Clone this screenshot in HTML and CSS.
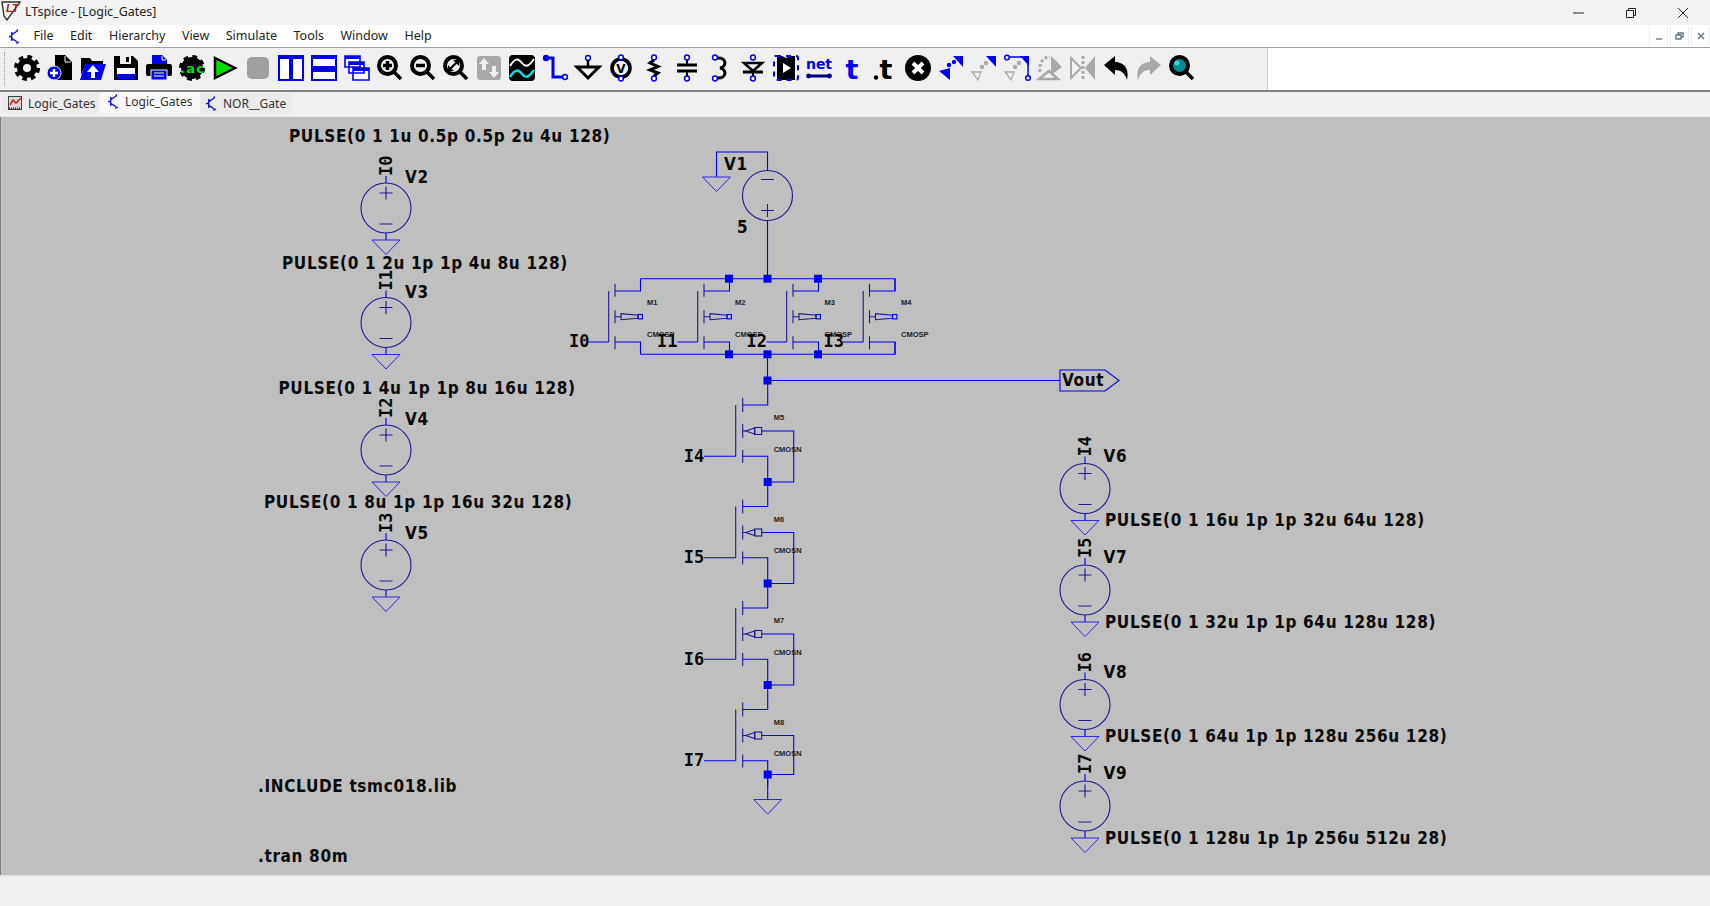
FILE: index.html
```html
<!DOCTYPE html>
<html>
<head>
    <meta http-equiv="Content-Type" content="text/html;charset=UTF-8"/>
    <title>LTspice - [Logic_Gates]</title>
    <link rel="stylesheet" href="styles.css">
</head>
<body>
<div class="titlebar">
    <svg class="app-logo" viewBox="0 0 20 20">
        <path class="logo-frame" d="M1 1H19L6 19L3 15Z"/>
        <text class="logo-text" x="5" y="11">LT</text>
    </svg>
    <span class="title-text">LTspice - [Logic_Gates]</span>
    <div class="win-buttons">
        <svg class="win-btn" viewBox="0 0 12 12"><path d="M0 6H11"/></svg>
        <svg class="win-btn" viewBox="0 0 12 12"><path d="M1.5 3.5H8.5V10.5H1.5Z M3.5 3.5V1.5H10.5V8.5H8.5"/></svg>
        <svg class="win-btn" viewBox="0 0 12 12"><path d="M1 1L11 11M11 1L1 11"/></svg>
    </div>
</div>

<div class="menubar">
    <svg class="sch-icon menu-icon" viewBox="0 0 12 16"><path d="M0 8H3M3 3V13M3 6L9 2V0M3 10L9 14M8 15.5L11 14"/></svg>
    <span class="menu-item">File</span>
    <span class="menu-item">Edit</span>
    <span class="menu-item">Hierarchy</span>
    <span class="menu-item">View</span>
    <span class="menu-item">Simulate</span>
    <span class="menu-item">Tools</span>
    <span class="menu-item">Window</span>
    <span class="menu-item">Help</span>
    <div class="mdi-buttons">
        <span class="mdi-btn"><svg viewBox="0 0 10 10"><path d="M2 8H8"/></svg></span>
        <span class="mdi-btn"><svg viewBox="0 0 10 10"><path d="M1 4H6V8H1Z M3 4V2H8V6H6"/></svg></span>
        <span class="mdi-btn"><svg viewBox="0 0 10 10"><path d="M2 2L8 8M8 2L2 8"/></svg></span>
    </div>
</div>

<div class="toolbar">
    <div class="tools">
        <div class="gripper"></div>
        <!-- settings -->
        <svg class="tool" viewBox="0 0 26 26"><circle cx="13" cy="13" r="11" fill="none" stroke="#000" stroke-width="4" stroke-dasharray="4.6 4.04"/><circle cx="13" cy="13" r="7" fill="none" stroke="#000" stroke-width="6"/></svg>
        <!-- new -->
        <svg class="tool" viewBox="0 0 26 26"><path d="M8 0H18L25 7V25H8Z"/><path d="M18 1V7H24" fill="none" stroke="#f0f0f0"/><circle cx="7" cy="18" r="7" fill="#0000e0" stroke="#f0f0f0"/><path d="M7 14V22M3 18H11" stroke="#fff" stroke-width="2.4"/></svg>
        <!-- open -->
        <svg class="tool" viewBox="0 0 26 26"><path d="M1 3H10L12 6H23V10H5L1 20Z"/><path d="M5 9H26L21 25H0Z" fill="#0000f0"/><path d="M13 10L7 17H11V23H15V17H19Z" fill="#fff"/></svg>
        <!-- save -->
        <svg class="tool" viewBox="0 0 26 26"><path d="M1 1H20L25 6V25H1Z"/><rect x="7" y="1" width="11" height="8" fill="#f0f0f0"/><rect x="13" y="2" width="3" height="5"/><rect x="4" y="13" width="18" height="9" fill="#fff"/><rect x="4" y="19" width="18" height="5" fill="#0000f0"/></svg>
        <!-- print -->
        <svg class="tool" viewBox="0 0 26 26"><path d="M6 0H16L21 5V10H6Z" fill="#0000f0"/><path d="M16 1V5H20" fill="none" stroke="#fff"/><rect x="0" y="9" width="26" height="12" rx="2"/><rect x="5" y="15" width="16" height="10" fill="#0000f0" stroke="#f0f0f0"/><path d="M8 18H18M8 21H18" stroke="#fff"/></svg>
        <!-- ac analysis -->
        <svg class="tool" viewBox="0 0 26 26"><circle cx="13" cy="13" r="11" fill="none" stroke="#000" stroke-width="4" stroke-dasharray="4.6 4.04"/><circle cx="13" cy="13" r="11"/><text class="ac-text" x="1" y="18" textLength="24">.ac</text></svg>
        <!-- run -->
        <svg class="tool" viewBox="0 0 26 26"><path d="M3 3L23 13L3 23Z" fill="#00e000" stroke="#000" stroke-width="2.5"/></svg>
        <!-- halt -->
        <svg class="tool" viewBox="0 0 26 26"><rect x="2" y="2" width="22" height="22" rx="5" fill="#a0a0a0"/></svg>
        <!-- tile vertically -->
        <svg class="tool" viewBox="0 0 26 26"><path class="tb-win" d="M1 1H12V25H1Z M14 1H25V25H14Z"/><path class="tb-head" d="M1 1H12V4H1Z M14 1H25V4H14Z"/></svg>
        <!-- tile horizontally -->
        <svg class="tool" viewBox="0 0 26 26"><path class="tb-win" d="M1 1H25V12H1Z M1 14H25V25H1Z"/><path class="tb-head" d="M1 1H25V4H1Z M1 14H25V17H1Z"/></svg>
        <!-- cascade -->
        <svg class="tool" viewBox="0 0 26 26"><path class="tb-win thin" d="M1 1H16V12H1Z M5 7H20V18H5Z M9 13H25V25H9Z"/><path class="tb-head" d="M1 1H16V4H1Z M5 7H20V10H5Z M9 13H25V16H9Z"/></svg>
        <!-- zoom in -->
        <svg class="tool" viewBox="0 0 26 26"><circle cx="10.5" cy="10.5" r="8.5" fill="#f0f0f0" stroke="#000" stroke-width="4"/><path d="M6 10.5H15M10.5 6V15M17 17L24 24" stroke="#000" stroke-width="3.5" fill="none"/></svg>
        <!-- zoom out -->
        <svg class="tool" viewBox="0 0 26 26"><circle cx="10.5" cy="10.5" r="8.5" fill="#f0f0f0" stroke="#000" stroke-width="4"/><path d="M6 10.5H15M17 17L24 24" stroke="#000" stroke-width="3.5" fill="none"/></svg>
        <!-- zoom fit -->
        <svg class="tool" viewBox="0 0 26 26"><circle cx="10.5" cy="10.5" r="8.5" fill="#f0f0f0" stroke="#000" stroke-width="4"/><path d="M17 17L24 24" stroke="#000" stroke-width="3.5"/><path d="M7 14L14 7" stroke="#000" stroke-width="2"/><path d="M5 10V16H11Z M16 11V5H10Z"/></svg>
        <!-- pan -->
        <svg class="tool" viewBox="0 0 26 26"><rect x="1" y="1" width="24" height="24" rx="3" fill="#a8a8a8"/><path d="M8 3L13 9H10V15H6V9H3Z M18 23L13 17H16V11H20V17H23Z" fill="#f0f0f0"/></svg>
        <!-- waveform -->
        <svg class="tool" viewBox="0 0 26 26"><rect x="0" y="0" width="26" height="26" rx="4"/><path d="M1 11C6 3 9 3 13 8S20 11 25 4" fill="none" stroke="#fff" stroke-width="2"/><path d="M1 22C6 14 9 14 13 19S20 22 25 15" fill="none" stroke="#00e0e0" stroke-width="2.5"/></svg>
        <!-- wire -->
        <svg class="tool" viewBox="0 0 26 26"><path d="M4 3H11V22H21" fill="none" stroke="#0000f0" stroke-width="3"/><circle cx="4" cy="3" r="3.2" fill="#0000f0"/><circle cx="23" cy="22" r="2.4" fill="#fff" stroke="#0000f0" stroke-width="1.5"/></svg>
        <!-- ground -->
        <svg class="tool" viewBox="0 0 26 26"><circle class="pin" cx="13" cy="3" r="2.4"/><path d="M13 5V11" stroke="#000" stroke-width="2.5"/><path d="M2 12H24L13 23Z" fill="none" stroke="#000" stroke-width="3"/></svg>
        <!-- label net -->
        <svg class="tool" viewBox="0 0 26 26"><circle cx="13" cy="13" r="9" fill="none" stroke="#000" stroke-width="3.6"/><text class="v-text" x="13" y="18" text-anchor="middle">V</text><circle class="pin" cx="13" cy="2.5" r="2.4"/><circle class="pin" cx="13" cy="23.5" r="2.4"/></svg>
        <!-- resistor -->
        <svg class="tool" viewBox="0 0 26 26"><path d="M13 5L9 8L17 11.5L9 15L17 18L13 21" fill="none" stroke="#000" stroke-width="3"/><circle class="pin" cx="13" cy="2.5" r="2.4"/><circle class="pin" cx="13" cy="23.5" r="2.4"/></svg>
        <!-- capacitor -->
        <svg class="tool" viewBox="0 0 26 26"><path d="M3 10H23M3 16H23" stroke="#000" stroke-width="3"/><path d="M13 5V10M13 16V21" stroke="#000" stroke-width="2"/><circle class="pin" cx="13" cy="2.5" r="2.4"/><circle class="pin" cx="13" cy="23.5" r="2.4"/></svg>
        <!-- inductor -->
        <svg class="tool" viewBox="0 0 26 26"><path d="M10 3C20 2 20 12 13 13C20 14 20 24 10 23" fill="none" stroke="#000" stroke-width="3"/><circle class="pin" cx="8" cy="2.5" r="2.4"/><circle class="pin" cx="8" cy="23.5" r="2.4"/></svg>
        <!-- diode -->
        <svg class="tool" viewBox="0 0 26 26"><path d="M4 8H22L13 16Z" fill="none" stroke="#000" stroke-width="2.5"/><path d="M3 17H23" stroke="#000" stroke-width="3"/><path d="M13 17V21" stroke="#000" stroke-width="2"/><circle class="pin" cx="13" cy="2.5" r="2.4"/><circle class="pin" cx="13" cy="23.5" r="2.4"/></svg>
        <!-- component -->
        <svg class="tool" viewBox="0 0 26 26"><path d="M4 1H9L13 3L17 1H22V25H4Z"/><rect x="1" y="1" width="24" height="24" rx="2" fill="none" stroke="#0000f0" stroke-width="2" stroke-dasharray="5 5"/><path d="M10 8L18 13L10 18Z" fill="#fff"/></svg>
        <!-- net name -->
        <svg class="tool" viewBox="0 0 26 26"><text class="net-text" x="0" y="14" textLength="26">net</text><path d="M2 21H24" stroke="#000080" stroke-width="3"/><circle cx="2.5" cy="21" r="2.4" fill="#000080"/><circle cx="23.5" cy="21" r="2.4" fill="#000080"/></svg>
        <!-- text -->
        <svg class="tool" viewBox="0 0 26 26"><text class="t-text blue" x="13" y="24" text-anchor="middle">t</text></svg>
        <!-- spice directive -->
        <svg class="tool" viewBox="0 0 26 26"><text class="t-text" x="14" y="24" text-anchor="middle">t</text><circle cx="4" cy="22.5" r="2.2"/></svg>
        <!-- cut -->
        <svg class="tool" viewBox="0 0 26 26"><circle cx="13" cy="13" r="13"/><path d="M8 8L18 18M18 8L8 18" stroke="#fff" stroke-width="4"/></svg>
        <!-- move -->
        <svg class="tool" viewBox="0 0 26 26"><path d="M15 1H25V12Z" fill="#0000f0"/><path d="M1 16L12 13V25Z" fill="#0000f0"/><circle cx="11" cy="10" r="2.2" fill="#0000f0"/><circle cx="16" cy="7" r="2.2" fill="#0000f0"/></svg>
        <!-- drag -->
        <svg class="tool" viewBox="0 0 26 26"><path d="M15 1H25V12Z" fill="#0000f0"/><path d="M1 17L10 17L7 25Z" fill="none" stroke="#a8a8a8" stroke-width="1.3"/><circle cx="11" cy="12" r="2.2" fill="#a8a8a8"/><circle cx="15" cy="8" r="2.2" fill="#a8a8a8"/></svg>
        <!-- drag wire -->
        <svg class="tool" viewBox="0 0 26 26"><path d="M4 2H24V21" fill="none" stroke="#0000f0" stroke-width="1.5"/><path d="M16 1H25V11Z" fill="#0000f0"/><circle cx="3" cy="2.5" r="2.3" fill="#fff" stroke="#0000f0" stroke-width="1.5"/><circle cx="24" cy="23" r="2.3" fill="#fff" stroke="#0000f0" stroke-width="1.5"/><path d="M1 17L10 17L7 25Z" fill="none" stroke="#a8a8a8" stroke-width="1.3"/><circle cx="11" cy="12" r="2.2" fill="#a8a8a8"/><circle cx="15" cy="8" r="2.2" fill="#a8a8a8"/></svg>
        <!-- rotate -->
        <svg class="tool" viewBox="0 0 26 26"><path d="M14 1L25 12L14 20Z" fill="#a8a8a8"/><path d="M3 17C2 8 6 2 13 2" fill="none" stroke="#a8a8a8" stroke-width="3" stroke-dasharray="3 2"/><path d="M2 24L12 16L21 24Z" fill="none" stroke="#a8a8a8" stroke-width="2.5"/></svg>
        <!-- mirror -->
        <svg class="tool" viewBox="0 0 26 26"><path d="M1 3L11 13L1 23Z" fill="none" stroke="#a8a8a8" stroke-width="2"/><path d="M25 1L15 13L25 25Z" fill="#a8a8a8"/><path d="M13 1V25" stroke="#a8a8a8" stroke-width="3" stroke-dasharray="3 2"/></svg>
        <!-- undo -->
        <svg class="tool" viewBox="0 0 26 26"><path d="M1 10L12 1V7C20 7 27 13 24 25C22 18 18 15 12 15V20Z"/></svg>
        <!-- redo -->
        <svg class="tool" viewBox="0 0 26 26"><path d="M25 10L14 1V7C6 7 -1 13 2 25C4 18 8 15 14 15V20Z" fill="#a8a8a8"/></svg>
        <!-- find -->
        <svg class="tool" viewBox="0 0 26 26"><circle cx="10.5" cy="10.5" r="8.5" fill="#008c96" stroke="#000" stroke-width="4"/><circle cx="8" cy="8" r="2.5" fill="#40d8d8"/><path d="M17 17L24 24" stroke="#000" stroke-width="3.5"/></svg>
    </div>
    <div class="toolbar-blank"></div>
</div>

<div class="tabbar">
    <div class="tab tab-plot">
        <svg class="plot-icon" viewBox="0 0 14 14"><rect x="0.5" y="0.5" width="13" height="13" fill="#d8d8d8" stroke="#404040"/><path d="M1 12.5H13" stroke="#202020" stroke-width="2" stroke-dasharray="1 1"/><path d="M2 9L5 4L8 7L13 2" fill="none" stroke="#d02020" stroke-width="1.6"/></svg>
        <span>Logic_Gates</span>
    </div>
    <div class="tab tab-active">
        <svg class="sch-icon" viewBox="0 0 12 16"><path d="M0 8H3M3 3V13M3 6L9 2V0M3 10L9 14M8 15.5L11 14"/></svg>
        <span>Logic_Gates</span>
    </div>
    <div class="tab tab-last">
        <svg class="sch-icon" viewBox="0 0 12 16"><path d="M0 8H3M3 3V13M3 6L9 2V0M3 10L9 14M8 15.5L11 14"/></svg>
        <span>NOR__Gate</span>
    </div>
</div>

<div class="canvas">
    <svg class="schematic" viewBox="0 116 1710 758" width="1710" height="758">
        <defs>
            <g id="vcell">
                <circle class="sym" r="25"/>
                <path class="sym" d="M-6.5 -15H6.5M0 -21.5V-8.5M-6.5 16H6.5"/>
            </g>
            <g id="gnd">
                <path class="gnd" d="M-14 0H14L0 14.5Z"/>
            </g>
            <g id="vsrc">
                <use href="#vcell"/>
                <path class="wire" d="M0 -25V-32M0 25V32"/>
                <use href="#gnd" y="32"/>
            </g>
            <g id="pmos">
                <path class="sym" d="M0 -33V-20M0 -6.5V6.5M0 19.5V32.5M-6.3 -25.7V25.3M0 0H6"/>
                <path class="wire" d="M-26.5 25.3H-6.3M0 -25.7H25.5V-38M0 25.3H25.5V37.6"/>
                <path class="sym" d="M6 -3V3L23 1.5V-1.5Z"/>
                <rect class="bulk" x="23" y="-2.2" width="4.4" height="4.4"/>
            </g>
            <g id="nmos">
                <path class="sym" d="M0 -33V-19M0 -7V7M0 19V32M-7 -26V25.3M0 0H3"/>
                <path class="wire" d="M-38.7 25.3H-7M0 -26H25V-51M0 25.3H25V51"/>
                <path class="sym" d="M3 0L12 -3V3Z"/>
                <rect class="sym" x="12" y="-3.5" width="7" height="7"/>
            </g>
            <path id="body-long" class="wire" d="M19 0H51V51H25"/>
            <rect id="node" class="node" x="-4" y="-4" width="8" height="8"/>
        </defs>

        <!-- left sources -->
        <g transform="translate(386 207)">
            <use href="#vsrc"/>
            <text class="sch mono" transform="translate(6 -32) rotate(-90)">I0</text>
            <text class="sch" x="19" y="-25">V2</text>
        </g>
        <g transform="translate(386 321.5)">
            <use href="#vsrc"/>
            <text class="sch mono" transform="translate(6 -32) rotate(-90)">I1</text>
            <text class="sch" x="19" y="-25">V3</text>
        </g>
        <g transform="translate(386 449)">
            <use href="#vsrc"/>
            <text class="sch mono" transform="translate(6 -32) rotate(-90)">I2</text>
            <text class="sch" x="19" y="-25">V4</text>
        </g>
        <g transform="translate(386 564)">
            <use href="#vsrc"/>
            <text class="sch mono" transform="translate(6 -32) rotate(-90)">I3</text>
            <text class="sch" x="19" y="-26">V5</text>
        </g>
        <text class="sch" x="289" y="140.5">PULSE(0 1 1u 0.5p 0.5p 2u 4u 128)</text>
        <text class="sch" x="282" y="268">PULSE(0 1 2u 1p 1p 4u 8u 128)</text>
        <text class="sch" x="278.5" y="392.5">PULSE(0 1 4u 1p 1p 8u 16u 128)</text>
        <text class="sch" x="264" y="507">PULSE(0 1 8u 1p 1p 16u 32u 128)</text>

        <!-- right sources -->
        <g transform="translate(1085 487.5)">
            <use href="#vsrc"/>
            <text class="sch mono" transform="translate(6 -32) rotate(-90)">I4</text>
            <text class="sch" x="18.5" y="-27">V6</text>
        </g>
        <g transform="translate(1085 589)">
            <use href="#vsrc"/>
            <text class="sch mono" transform="translate(6 -32) rotate(-90)">I5</text>
            <text class="sch" x="18.5" y="-27">V7</text>
        </g>
        <g transform="translate(1085 703.5)">
            <use href="#vsrc"/>
            <text class="sch mono" transform="translate(6 -32) rotate(-90)">I6</text>
            <text class="sch" x="18.5" y="-27">V8</text>
        </g>
        <g transform="translate(1085 805)">
            <use href="#vsrc"/>
            <text class="sch mono" transform="translate(6 -32) rotate(-90)">I7</text>
            <text class="sch" x="18.5" y="-27">V9</text>
        </g>
        <text class="sch" x="1105" y="525">PULSE(0 1 16u 1p 1p 32u 64u 128)</text>
        <text class="sch" x="1105" y="626.5">PULSE(0 1 32u 1p 1p 64u 128u 128)</text>
        <text class="sch" x="1105" y="741">PULSE(0 1 64u 1p 1p 128u 256u 128)</text>
        <text class="sch" x="1105" y="843">PULSE(0 1 128u 1p 1p 256u 512u 28)</text>

        <!-- supply -->
        <use href="#vcell" transform="translate(767.5 194.5) rotate(180)"/>
        <path class="wire" d="M767.5 169.5V151H716.5V176M767.5 219.5V277.7M767.5 353.3V379.5"/>
        <use href="#gnd" x="716.5" y="176"/>
        <text class="sch" x="724" y="169">V1</text>
        <text class="sch" x="737" y="232">5</text>

        <!-- pull up -->
        <path class="wire" d="M640.5 277.7H895V290M640.5 353.3H895V341"/>
        <use href="#pmos" x="615" y="315.7"/>
        <use href="#pmos" x="704" y="315.7"/>
        <use href="#pmos" x="793" y="315.7"/>
        <use href="#pmos" x="869.5" y="315.7"/>
        <text class="tiny" x="647" y="303.5">M1</text>
        <text class="tiny" x="647" y="335.5">CMOSP</text>
        <text class="tiny" x="735" y="303.5">M2</text>
        <text class="tiny" x="735" y="335.5">CMOSP</text>
        <text class="tiny" x="824.5" y="303.5">M3</text>
        <text class="tiny" x="824.5" y="335.5">CMOSP</text>
        <text class="tiny" x="901" y="303.5">M4</text>
        <text class="tiny" x="901" y="335.5">CMOSP</text>
        <text class="sch mono" x="569" y="346">I0</text>
        <text class="sch mono" x="657" y="346">I1</text>
        <text class="sch mono" x="746.5" y="346">I2</text>
        <text class="sch mono" x="823.5" y="346">I3</text>
        <use href="#node" x="729" y="277.7"/>
        <use href="#node" x="767.5" y="277.7"/>
        <use href="#node" x="818" y="277.7"/>
        <use href="#node" x="729" y="353.3"/>
        <use href="#node" x="767.5" y="353.3"/>
        <use href="#node" x="818" y="353.3"/>
        <use href="#node" x="767.5" y="379.5"/>

        <!-- output -->
        <path class="wire" d="M767.5 379.5H1060"/>
        <path class="flag" d="M1060 369H1105L1119 379.5L1105 390H1060Z"/>
        <text class="sch" x="1062" y="385">Vout</text>

        <!-- pull down -->
        <g transform="translate(742.7 430)">
            <use href="#nmos"/><use href="#body-long"/>
            <text class="tiny" x="31" y="-11">M5</text>
            <text class="tiny" x="31" y="20.5">CMOSN</text>
            <text class="sch mono" x="-59" y="30.7">I4</text>
            <use href="#node" x="25" y="51"/>
        </g>
        <g transform="translate(742.7 531.5)">
            <use href="#nmos"/><use href="#body-long"/>
            <text class="tiny" x="31" y="-11">M6</text>
            <text class="tiny" x="31" y="20.5">CMOSN</text>
            <text class="sch mono" x="-59" y="30.7">I5</text>
            <use href="#node" x="25" y="51"/>
        </g>
        <g transform="translate(742.7 633)">
            <use href="#nmos"/><use href="#body-long"/>
            <text class="tiny" x="31" y="-11">M7</text>
            <text class="tiny" x="31" y="20.5">CMOSN</text>
            <text class="sch mono" x="-59" y="30.7">I6</text>
            <use href="#node" x="25" y="51"/>
        </g>
        <g transform="translate(742.7 734.5)">
            <use href="#nmos"/>
            <path class="wire" d="M19 0H51V39H25"/>
            <text class="tiny" x="31" y="-11">M8</text>
            <text class="tiny" x="31" y="20.5">CMOSN</text>
            <text class="sch mono" x="-59" y="30.7">I7</text>
            <use href="#node" x="25" y="39"/>
        </g>
        <path class="wire" d="M767.7 774V798.5"/>
        <use href="#gnd" x="767.7" y="798.5"/>

        <!-- directives -->
        <text class="sch" x="258" y="791">.INCLUDE tsmc018.lib</text>
        <text class="sch" x="258" y="861">.tran 80m</text>
    </svg>
</div>

<div class="statusbar"></div>
</body>
</html>
```

FILE: styles.css
```css
html, body {
    margin: 0;
    padding: 0;
    height: 100%;
}

body {
    display: flex;
    flex-direction: column;
    height: 100vh;
    overflow: hidden;
    background-color: #f0f0f0;
    font-family: "Noto Sans", "Open Sans", sans-serif;
    font-size: 12.5px;
    color: #222;
}

/* title bar */
.titlebar {
    flex: 0 0 25px;
    display: flex;
    align-items: center;
    background-color: #f3f3f3;
}

.app-logo {
    width: 20px;
    height: 20px;
    margin: 0 4px 3px 1px;
}

.logo-frame {
    fill: #f3f3f3;
    stroke: #333;
    stroke-width: 1.4;
}

.logo-text {
    font: italic bold 11px "Liberation Sans", sans-serif;
    fill: #b02020;
}

.title-text {
    margin-bottom: 2px;
}

.win-buttons {
    margin-left: auto;
    display: flex;
    gap: 40px;
    margin-right: 21px;
}

.win-btn {
    width: 12px;
    height: 12px;
    fill: none;
    stroke: #222;
    stroke-width: 1;
}

/* menu */
.menubar {
    flex: 0 0 22px;
    display: flex;
    align-items: center;
    gap: 16.5px;
    background-color: #fff;
    border-bottom: 1px solid #a0a0a0;
}

.sch-icon {
    width: 11px;
    height: 15px;
    fill: none;
    stroke: #1010d0;
    stroke-width: 1.5;
}

.menu-icon {
    margin-left: 9px;
    margin-right: -3px;
}

.menu-item {
    line-height: 22px;
}

.mdi-buttons {
    margin-left: auto;
    display: flex;
    gap: 2px;
}

.mdi-btn {
    width: 19px;
    height: 20px;
    display: flex;
    align-items: center;
    justify-content: center;
    border: 1px solid #eee;
    border-width: 0 1px;
    box-sizing: border-box;
}

.mdi-btn svg {
    width: 10px;
    height: 10px;
    fill: none;
    stroke: #607080;
    stroke-width: 1.3;
}

/* toolbar */
.toolbar {
    flex: 0 0 42px;
    display: flex;
    background-color: #f0f0f0;
    border-bottom: 2px solid #808080;
}

.tools {
    position: relative;
    width: 1268px;
    display: flex;
    align-items: center;
    gap: 7px;
    padding-left: 14px;
    padding-bottom: 2px;
    box-sizing: border-box;
    border-right: 1px solid #c8c8c8;
}

.gripper {
    position: absolute;
    left: 4px;
    top: 4px;
    bottom: 4px;
    border-left: 1px dotted #999;
}

.tool {
    flex: 0 0 26px;
    width: 26px;
    height: 26px;
    overflow: visible;
}

.tb-win {
    fill: #fff;
    stroke: #0000f0;
    stroke-width: 2;
}

.tb-win.thin {
    stroke-width: 1.6;
}

.tb-head {
    fill: #0000f0;
}

.pin {
    fill: #fff;
    stroke: #0000f0;
    stroke-width: 1.5;
}

.ac-text {
    font: bold 13px "DejaVu Sans", sans-serif;
    fill: #00e000;
}

.v-text {
    font: bold 12px "DejaVu Sans", sans-serif;
}

.net-text {
    font: bold 14px "DejaVu Sans", sans-serif;
    fill: #0000f0;
}

.t-text {
    font: bold 27px "DejaVu Sans", sans-serif;
}

.t-text.blue {
    fill: #0000f0;
}

.toolbar-blank {
    flex: 1;
    background-color: #fff;
}

/* tabs */
.tabbar {
    flex: 0 0 25px;
    display: flex;
    align-items: flex-start;
    padding-left: 3px;
    background-color: #f0f0f0;
    color: #333;
    font-size: 12px;
    border-bottom: 1px solid #e6e6e6;
    box-sizing: border-box;
}

.tab {
    display: flex;
    align-items: center;
    gap: 6px;
    box-sizing: border-box;
    white-space: nowrap;
}

.tab-plot {
    width: 95px;
    height: 20px;
    margin-top: 1px;
    padding-left: 5px;
    background-color: #ebebeb;
}

.plot-icon {
    width: 14px;
    height: 14px;
}

.tab-active {
    width: 100px;
    height: 21px;
    margin-left: 2px;
    padding-left: 8px;
    padding-bottom: 3px;
    background-color: #f8f8f8;
}

.tab-last {
    width: 92px;
    height: 20px;
    margin-top: 1px;
    padding-left: 6px;
    background-color: #ebebeb;
}

/* schematic */
.canvas {
    flex: 0 0 758px;
    background-color: #bfbfbf;
    border-left: 1px solid #808080;
}

.schematic {
    display: block;
    margin-left: -1px;
}

.wire {
    fill: none;
    stroke: #0000e8;
    stroke-width: 1.1;
}

.sym {
    fill: none;
    stroke: #1a1a90;
    stroke-width: 1.1;
}

.gnd {
    fill: none;
    stroke: #2a2ae0;
    stroke-width: 1;
}

.bulk {
    fill: none;
    stroke: #0000e8;
    stroke-width: 1.1;
}

.node {
    fill: #0000f0;
}

.flag {
    fill: none;
    stroke: #0000e8;
    stroke-width: 1.1;
}

.sch {
    font-family: "DejaVu Sans", sans-serif;
    font-weight: bold;
    font-stretch: condensed;
    font-size: 17px;
    letter-spacing: 0.65px;
    fill: #0a0a0a;
}

.sch.mono {
    font-family: "DejaVu Sans Mono", monospace;
    font-stretch: normal;
    letter-spacing: 0;
}

.tiny {
    font-family: "Liberation Sans", sans-serif;
    font-weight: bold;
    font-size: 7.5px;
    fill: #222;
}

.statusbar {
    flex: 1;
    background-color: #f0f0f0;
    border-top: 2px solid #e4e4e4;
}
```
